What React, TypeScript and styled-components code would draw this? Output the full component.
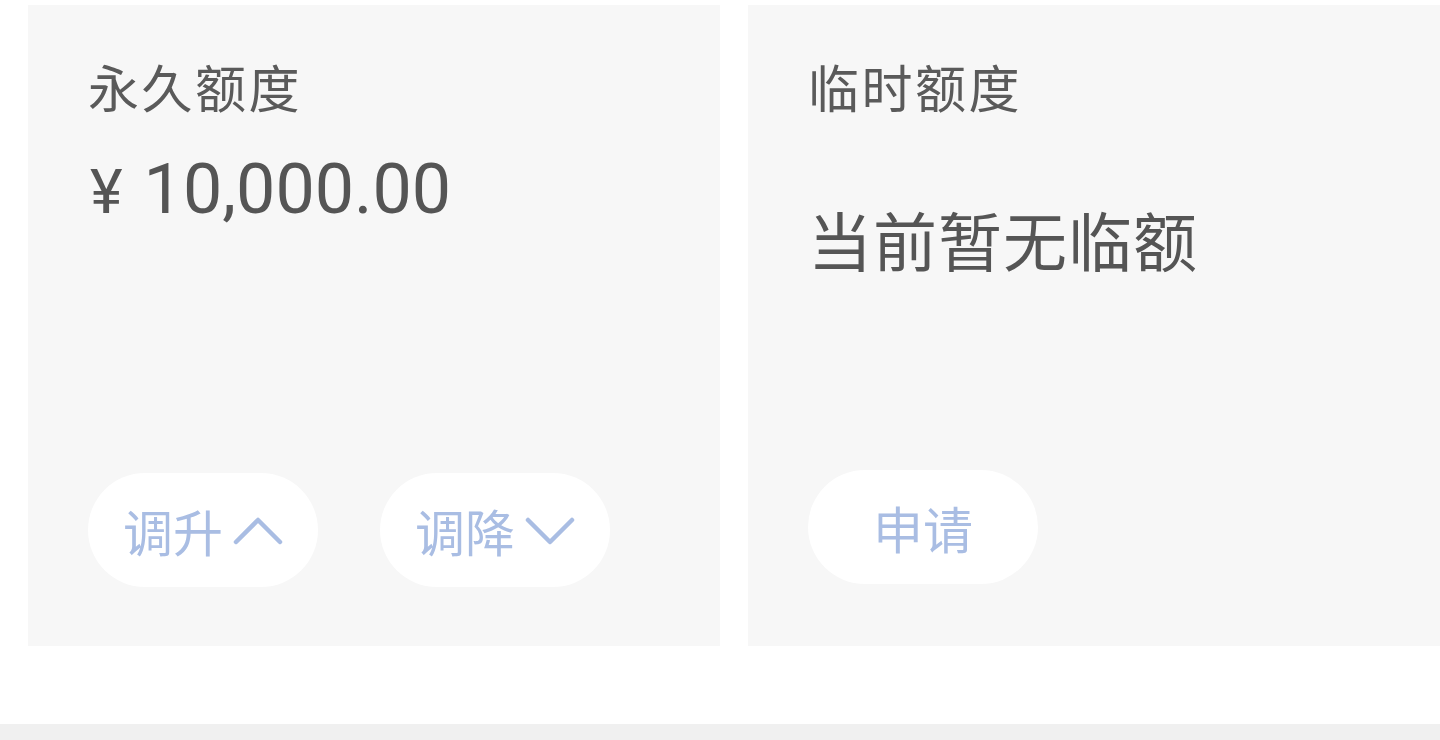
import styled, { createGlobalStyle } from "styled-components";

const GlobalStyle = createGlobalStyle`
  html, body {
    margin: 0;
    padding: 0;
    background: #ffffff;
    overflow: hidden;
  }
  body {
    font-family: "Noto Sans CJK SC", "Noto Sans", sans-serif;
  }
`;

const Page = styled.div`
  width: 1440px;
  height: 740px;
  display: flex;
  flex-direction: column;
  background: #ffffff;
`;

const CardRow = styled.div`
  display: flex;
  gap: 28px;
  padding: 5px 0 0 28px;
`;

const Card = styled.div<{ $bottom: number }>`
  flex: 0 0 692px;
  height: 641px;
  box-sizing: border-box;
  background: #f7f7f7;
  padding: 0 60px ${(p) => p.$bottom}px 60px;
  display: flex;
  flex-direction: column;
`;

const Title = styled.div`
  margin-top: 49px;
  font-size: 51px;
  line-height: 64px;
  color: #5a5a5a;
  letter-spacing: 2.5px;
`;

const Amount = styled.div`
  margin-top: 31px;
  font-family: Roboto, "Noto Sans", sans-serif;
  font-size: 70px;
  line-height: 80px;
  color: #555555;
  display: flex;
  align-items: baseline;
`;

const Yen = styled.span`
  font-size: 62px;
  margin-right: 21px;
  margin-left: 2px;
`;

const Empty = styled.div`
  margin-top: 80px;
  font-size: 64px;
  line-height: 80px;
  color: #555555;
  letter-spacing: 1px;
`;

const Actions = styled.div`
  margin-top: auto;
  display: flex;
  gap: 62px;
`;

const PillButton = styled.button`
  width: 230px;
  height: 114px;
  border: none;
  border-radius: 57px;
  background: #ffffff;
  color: #a9bde3;
  font-family: "Noto Sans CJK SC", sans-serif;
  font-size: 50px;
  display: flex;
  align-items: center;
  justify-content: center;
  gap: 10px;
  padding: 0;
  cursor: pointer;
`;

const Strip = styled.div`
  margin-top: 78px;
  height: 16px;
  background: #f0f0f0;
`;

function Chevron({ up }: { up?: boolean }) {
  return (
    <svg width="50" height="32" viewBox="0 0 50 32" fill="none">
      <polyline
        points={up ? "3,28 25,6 47,28" : "3,6 25,28 47,6"}
        stroke="#a9bde3"
        strokeWidth="4.5"
        strokeLinecap="round"
        strokeLinejoin="round"
      />
    </svg>
  );
}

export default function App() {
  return (
    <Page>
      <GlobalStyle />
      <CardRow>
        <Card $bottom={59}>
          <Title>永久额度</Title>
          <Amount>
            <Yen>¥</Yen>10,000.00
          </Amount>
          <Actions>
            <PillButton>
              调升
              <Chevron up />
            </PillButton>
            <PillButton>
              调降
              <Chevron />
            </PillButton>
          </Actions>
        </Card>
        <Card $bottom={62}>
          <Title>临时额度</Title>
          <Empty>当前暂无临额</Empty>
          <Actions>
            <PillButton>申请</PillButton>
          </Actions>
        </Card>
      </CardRow>
      <Strip />
    </Page>
  );
}
